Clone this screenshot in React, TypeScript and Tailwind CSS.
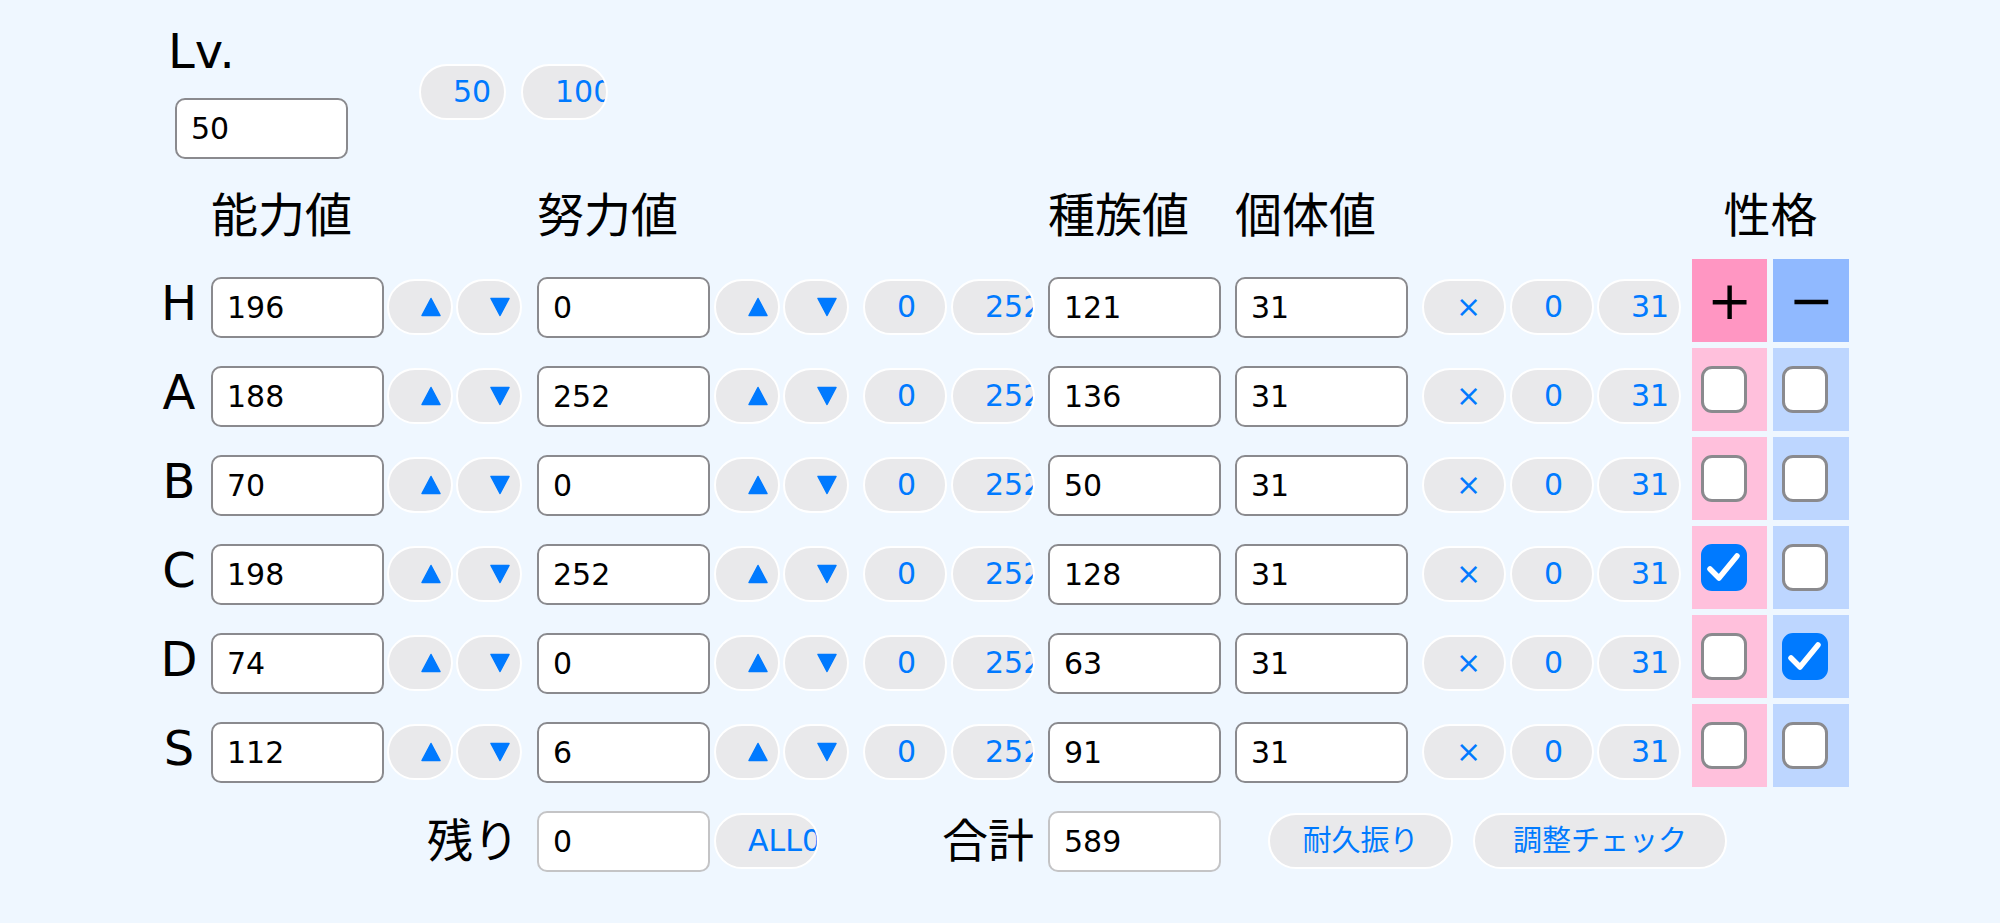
import React from 'react';

type Row = {
  label: string;
  stat: string;
  ev: string;
  base: string;
  iv: string;
  plus: boolean;
  minus: boolean;
};

const rows: Row[] = [
  { label: 'H', stat: '196', ev: '0', base: '121', iv: '31', plus: false, minus: false },
  { label: 'A', stat: '188', ev: '252', base: '136', iv: '31', plus: false, minus: false },
  { label: 'B', stat: '70', ev: '0', base: '50', iv: '31', plus: false, minus: false },
  { label: 'C', stat: '198', ev: '252', base: '128', iv: '31', plus: true, minus: false },
  { label: 'D', stat: '74', ev: '0', base: '63', iv: '31', plus: false, minus: true },
  { label: 'S', stat: '112', ev: '6', base: '91', iv: '31', plus: false, minus: false },
];

const NumInput: React.FC<{ value: string; light?: boolean; className?: string }> = ({ value, light, className = '' }) => (
  <input
    defaultValue={value}
    className={`h-[61px] w-[173px] shrink-0 rounded-[10px] border-2 bg-white pl-[14px] text-[30px] text-black outline-none ${
      light ? 'border-[#c4c4c6]' : 'border-[#8a8a8e]'
    } ${className}`}
  />
);

// pill button; text sits at a fixed left inset and is clipped at the right edge
const Pill: React.FC<{ className?: string; centered?: boolean; children: React.ReactNode }> = ({
  className = '',
  centered,
  children,
}) => (
  <button
    className={`flex h-[56px] shrink-0 items-center overflow-hidden whitespace-nowrap rounded-full border-2 border-white bg-[#e9e9eb] leading-none text-[#007aff] ${
      centered ? 'justify-center text-[29px]' : 'pl-[32px] text-left text-[30px]'
    } ${className}`}
  >
    {children}
  </button>
);

const Up = () => (
  <svg width="20" height="20" viewBox="0 0 20 20">
    <path d="M10 1.5 L19 18.5 L1 18.5 Z" fill="#007aff" stroke="#007aff" strokeWidth="1.5" strokeLinejoin="round" />
  </svg>
);

const Down = () => (
  <svg width="20" height="20" viewBox="0 0 20 20">
    <path d="M1 1.5 L19 1.5 L10 18.5 Z" fill="#007aff" stroke="#007aff" strokeWidth="1.5" strokeLinejoin="round" />
  </svg>
);

const Check: React.FC<{ checked: boolean }> = ({ checked }) => (
  <div
    role="checkbox"
    aria-checked={checked}
    className={`ml-[9px] flex h-[47px] w-[46px] items-center justify-center rounded-[11px] border-[3px] ${
      checked ? 'border-[#007aff] bg-[#007aff]' : 'border-[#8a8a8e] bg-white'
    }`}
  >
    {checked && (
      <svg width="40" height="40" viewBox="0 0 40 40">
        <path d="M6 21 L15 30 L33 8" fill="none" stroke="white" strokeWidth="5.5" strokeLinecap="round" strokeLinejoin="round" />
      </svg>
    )}
  </div>
);

const App: React.FC = () => {
  return (
    <div className="min-h-screen bg-[#eff7ff] font-['DejaVu_Sans','Noto_Sans_CJK_JP',sans-serif] text-black">
      {/* Level */}
      <div className="flex items-start pl-[168px] pt-[23px]">
        <div className="flex flex-col">
          <div className="text-[48px] leading-[56px]">Lv.</div>
          <NumInput value="50" className="ml-[7px] mt-[19px] w-[172px]" />
        </div>
        <Pill className="ml-[71px] mt-[41px] w-[87px]">50</Pill>
        <Pill className="ml-[15px] mt-[41px] w-[87px]">100</Pill>
      </div>

      {/* Headings */}
      <div className="mt-[29px] flex h-[56px] pl-[155px] text-[47px] leading-[56px]">
        <div className="w-[56px]" />
        <div className="w-[326px]">能力値</div>
        <div className="w-[511px]">努力値</div>
        <div className="w-[187px]">種族値</div>
        <div className="w-[457px]">個体値</div>
        <div className="w-[157px] text-center">性格</div>
      </div>

      {/* Stat rows */}
      <div className="mt-[15px] flex flex-col gap-[6px] pl-[155px]">
        {rows.map((r, i) => (
          <div key={r.label} className="flex h-[83px] items-start">
            <div className="mt-[16px] w-[48px] text-center text-[48px] leading-[56px]">{r.label}</div>
            <NumInput value={r.stat} className="ml-[8px] mt-[18px]" />
            <Pill className="ml-[3px] mt-[20px] w-[66px]"><Up /></Pill>
            <Pill className="ml-[3px] mt-[20px] w-[66px]"><Down /></Pill>
            <NumInput value={r.ev} className="ml-[15px] mt-[18px]" />
            <Pill className="ml-[4px] mt-[20px] w-[66px]"><Up /></Pill>
            <Pill className="ml-[3px] mt-[20px] w-[66px]"><Down /></Pill>
            <Pill className="ml-[14px] mt-[20px] w-[84px]">0</Pill>
            <Pill className="ml-[4px] mt-[20px] w-[84px]">252</Pill>
            <NumInput value={r.base} className="ml-[13px] mt-[18px]" />
            <NumInput value={r.iv} className="ml-[14px] mt-[18px]" />
            <Pill className="ml-[14px] mt-[20px] w-[84px]">×</Pill>
            <Pill className="ml-[4px] mt-[20px] w-[84px]">0</Pill>
            <Pill className="ml-[3px] mt-[20px] w-[84px]">31</Pill>
            {i === 0 ? (
              <>
                <div className="ml-[11px] flex h-[83px] w-[75px] items-center justify-center bg-[#ff96c2] text-[54px] leading-none">+</div>
                <div className="ml-[6px] flex h-[83px] w-[76px] items-center justify-center bg-[#90b9ff] text-[54px] leading-none">−</div>
              </>
            ) : (
              <>
                <div className="ml-[11px] flex h-[83px] w-[75px] items-center bg-[#ffc0dc]">
                  <Check checked={r.plus} />
                </div>
                <div className="ml-[6px] flex h-[83px] w-[76px] items-center bg-[#bdd6ff]">
                  <Check checked={r.minus} />
                </div>
              </>
            )}
          </div>
        ))}

        {/* Totals */}
        <div className="flex h-[83px] items-start">
          <div className="mt-[18px] flex h-[61px] w-[382px] items-center justify-end pr-[18px] text-[46px]">残り</div>
          <NumInput value="0" light className="mt-[18px]" />
          <Pill className="ml-[4px] mt-[20px] w-[105px]">ALL0</Pill>
          <div className="mt-[18px] flex h-[61px] w-[229px] items-center justify-end pr-[14px] text-[46px]">合計</div>
          <NumInput value="589" light className="mt-[18px]" />
          <Pill centered className="ml-[47px] mt-[20px] w-[185px]">耐久振り</Pill>
          <Pill centered className="ml-[20px] mt-[20px] w-[254px]">調整チェック</Pill>
        </div>
      </div>
    </div>
  );
};

export default App;
